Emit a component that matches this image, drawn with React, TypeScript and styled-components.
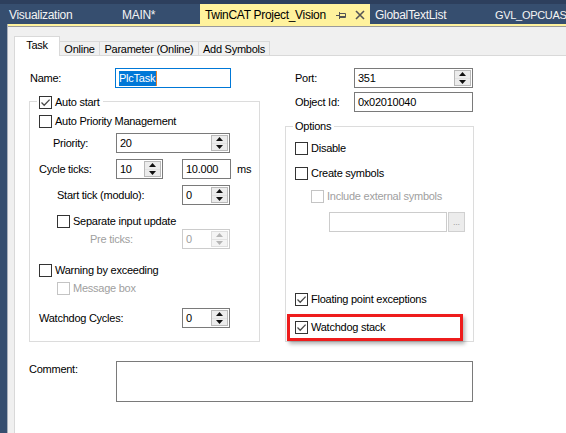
import React from 'react';
import styled, { createGlobalStyle } from 'styled-components';

const GlobalStyle = createGlobalStyle`
  html, body { margin: 0; padding: 0; }
  body {
    background: #f0f0f0;
    font-family: "Liberation Sans", Arial, sans-serif;
    font-size: 11px;
    letter-spacing: -0.25px;
    color: #000;
  }
  * { box-sizing: border-box; }
`;

const Frame = styled.div`
  width: 566px;
  height: 433px;
  overflow: hidden;
  display: flex;
  flex-direction: column;
`;

/* ---------- document tab bar ---------- */

const DocBar = styled.div`
  height: 24px;
  flex: none;
  display: flex;
  padding-left: 4px;
  background: #364e6f;
  border-top: 4px solid #2d3f5d;
  overflow: hidden;
`;

const DocTab = styled.div<{ $width: number; $active?: boolean; $size?: number }>`
  width: ${({ $width }) => $width}px;
  flex: none;
  height: 20px;
  display: flex;
  align-items: center;
  padding: 2px 5px 0 5px;
  font-size: ${({ $size }) => $size ?? 12}px;
  letter-spacing: -0.3px;
  white-space: nowrap;
  color: ${({ $active }) => ($active ? '#000' : '#f4f4f4')};
  background: ${({ $active }) => ($active ? '#fff29d' : 'transparent')};
`;

const DocTabTitle = styled.span`
  flex: 1;
`;

const DocTabIcons = styled.span`
  display: flex;
  align-items: center;
  gap: 9px;
`;

/* ---------- body ---------- */

const Body = styled.div`
  flex: 1;
  display: flex;
  min-height: 0;
`;

const SideStrip = styled.div`
  width: 8px;
  flex: none;
  background: #364e6f;
  border-right: 1px solid #a9b0bb;
`;

const Main = styled.div`
  flex: 1;
  display: flex;
  flex-direction: column;
  border-top: 2px solid #fff29d;
`;

const TabWell = styled.div`
  flex: 1;
  display: flex;
  flex-direction: column;
  padding-left: 6px;
  background: #f0f0f0;
  border-top: 1px solid #9a9a9a;
`;

const TabStrip = styled.div`
  height: 28px;
  flex: none;
  display: flex;
  align-items: flex-end;
`;

const PageTab = styled.div<{ $width: number; $active?: boolean }>`
  width: ${({ $width }) => $width}px;
  height: ${({ $active }) => ($active ? 20 : 14)}px;
  display: flex;
  align-items: center;
  justify-content: center;
  white-space: nowrap;
  border-top: 1px solid #d9d9d9;
  border-right: 1px solid #d9d9d9;
  border-left: ${({ $active }) => ($active ? '1px solid #d9d9d9' : 'none')};
  background: ${({ $active }) => ($active ? '#fff' : '#f0f0f0')};
  padding-bottom: ${({ $active }) => ($active ? 4 : 0)}px;
  margin-bottom: ${({ $active }) => ($active ? -1 : 0)}px;
  position: ${({ $active }) => ($active ? 'relative' : 'static')};
  z-index: ${({ $active }) => ($active ? 1 : 'auto')};
`;

const Pane = styled.div`
  flex: 1;
  background: #fff;
  border-top: 1px solid #d9d9d9;
  border-left: 1px solid #d9d9d9;
  padding: 12px 0 0 14px;
`;

const Columns = styled.div`
  display: flex;
  align-items: flex-start;
  gap: 25px;
`;

const Column = styled.div<{ $width: number }>`
  width: ${({ $width }) => $width}px;
  flex: none;
  display: flex;
  flex-direction: column;
`;

/* ---------- group boxes ---------- */

const GroupBox = styled.div<{ $top: number; $bottom: number }>`
  margin-top: ${({ $top }) => $top}px;
  padding-bottom: ${({ $bottom }) => $bottom}px;
  border: 1px solid #dcdcdc;
  display: flex;
  flex-direction: column;
`;

const Legend = styled.div<{ $lift: number }>`
  align-self: flex-start;
  display: flex;
  align-items: center;
  gap: 3px;
  height: 13px;
  line-height: 13px;
  margin: -${({ $lift }) => $lift}px 0 0 7px;
  padding: 0 3px 0 2px;
  background: #fff;
`;

/* ---------- rows ---------- */

const FieldRow = styled.div<{ $top?: number; $indent?: number }>`
  display: flex;
  align-items: center;
  height: 20px;
  margin-top: ${({ $top }) => $top ?? 0}px;
  padding-left: ${({ $indent }) => $indent ?? 0}px;
`;

const FieldLabel = styled.span<{ $width: number; $disabled?: boolean }>`
  width: ${({ $width }) => $width}px;
  flex: none;
  white-space: nowrap;
  color: ${({ $disabled }) => ($disabled ? '#a0a0a0' : '#000')};
`;

const Unit = styled.span`
  margin-left: 6px;
`;

const CheckRow = styled.div<{ $top?: number; $indent?: number; $disabled?: boolean }>`
  display: flex;
  align-items: center;
  gap: 3px;
  height: 13px;
  line-height: 13px;
  white-space: nowrap;
  margin-top: ${({ $top }) => $top ?? 0}px;
  padding-left: ${({ $indent }) => $indent ?? 0}px;
  color: ${({ $disabled }) => ($disabled ? '#a0a0a0' : '#000')};
`;

const Box = styled.span<{ $disabled?: boolean }>`
  width: 13px;
  height: 13px;
  flex: none;
  display: flex;
  align-items: center;
  justify-content: center;
  background: #fff;
  border: 1px solid ${({ $disabled }) => ($disabled ? '#c4c4c4' : '#333')};
`;

const Highlight = styled.div<{ $top: number }>`
  margin: ${({ $top }) => $top}px 0 0 1px;
  width: 176px;
  height: 27px;
  display: flex;
  align-items: center;
  padding: 0 0 1px 5px;
  border: 3px solid #ee1c1c;
  box-shadow: 2px 3px 4px rgba(0, 0, 0, 0.3);
  background: #fff;
  position: relative;
`;

/* ---------- inputs ---------- */

const TextBox = styled.div<{ $width: number; $focused?: boolean; $disabled?: boolean; $gap?: number }>`
  width: ${({ $width }) => $width}px;
  height: 20px;
  flex: none;
  display: flex;
  align-items: center;
  margin-left: ${({ $gap }) => $gap ?? 0}px;
  padding: 0 1px 0 3px;
  background: #fff;
  white-space: nowrap;
  color: ${({ $disabled }) => ($disabled ? '#a0a0a0' : '#000')};
  border: 1px solid
    ${({ $focused, $disabled }) => ($focused ? '#0078d7' : $disabled ? '#cccccc' : '#7a7a7a')};
`;

const Value = styled.span`
  flex: 1;
`;

const Selected = styled.span`
  background: #0078d7;
  color: #fff;
  line-height: 15px;
  padding-right: 1px;
  border-right: 1px solid #e8842c;
`;

const Spinner = styled.span<{ $disabled?: boolean }>`
  width: 17px;
  height: 16px;
  flex: none;
  display: flex;
  flex-direction: column;
  border: 1px solid ${({ $disabled }) => ($disabled ? '#dedede' : '#b9b9b9')};
  background: ${({ $disabled }) => ($disabled ? '#f4f4f4' : '#ececec')};
`;

const SpinHalf = styled.span<{ $disabled?: boolean }>`
  flex: 1;
  display: flex;
  align-items: center;
  justify-content: center;
  & + & {
    border-top: 1px solid ${({ $disabled }) => ($disabled ? '#e2e2e2' : '#c6c6c6')};
  }
  svg {
    fill: ${({ $disabled }) => ($disabled ? '#b5b5b5' : '#111')};
  }
`;

const BrowseButton = styled.span`
  width: 17px;
  height: 20px;
  flex: none;
  display: flex;
  align-items: flex-end;
  justify-content: center;
  padding-bottom: 4px;
  margin-left: 1px;
  font-size: 9px;
  line-height: 9px;
  color: #a0a0a0;
  background: #ececec;
  border: 1px solid #d0d0d0;
`;

const CommentRow = styled.div`
  display: flex;
  align-items: flex-start;
  margin-top: 19px;
`;

const CommentLabel = styled.span`
  width: 87px;
  flex: none;
  margin-top: 2px;
`;

const CommentBox = styled.div`
  width: 357px;
  height: 41px;
  background: #fff;
  border: 1px solid #7a7a7a;
`;

/* ---------- small parts ---------- */

const Check = ({ checked, disabled }: { checked?: boolean; disabled?: boolean }) => (
  <Box $disabled={disabled}>
    {checked && (
      <svg width="11" height="11" viewBox="0 0 11 11">
        <path d="M1.5 5.5 L4.2 8.2 L9.6 2.6" fill="none" stroke="#4a4a4a" strokeWidth="1.3" />
      </svg>
    )}
  </Box>
);

const CheckItem = ({
  label, checked, disabled, top, indent,
}: { label: string; checked?: boolean; disabled?: boolean; top?: number; indent?: number }) => (
  <CheckRow $top={top} $indent={indent} $disabled={disabled}>
    <Check checked={checked} disabled={disabled} />
    {label}
  </CheckRow>
);

const SpinBox = ({ value, width, disabled }: { value: string; width: number; disabled?: boolean }) => (
  <TextBox $width={width} $disabled={disabled}>
    <Value>{value}</Value>
    <Spinner $disabled={disabled}>
      <SpinHalf $disabled={disabled}>
        <svg width="7" height="4" viewBox="0 0 7 4"><polygon points="0,4 3.5,0 7,4" /></svg>
      </SpinHalf>
      <SpinHalf $disabled={disabled}>
        <svg width="7" height="4" viewBox="0 0 7 4"><polygon points="0,0 7,0 3.5,4" /></svg>
      </SpinHalf>
    </Spinner>
  </TextBox>
);

const PinIcon = () => (
  <svg width="10" height="9" viewBox="0 0 10 9">
    <path d="M0 4.5 H3.5 M3.5 1 V8" stroke="#555" strokeWidth="1" fill="none" />
    <path d="M3.5 2.5 H9.5 V6.5 H3.5" stroke="#555" strokeWidth="1" fill="none" />
    <path d="M3.5 5.5 H9.5" stroke="#555" strokeWidth="1" />
  </svg>
);

const CloseIcon = () => (
  <svg width="10" height="10" viewBox="0 0 10 10">
    <path d="M1 1 L9 9 M9 1 L1 9" stroke="#555" strokeWidth="1.6" />
  </svg>
);

const App = () => (
  <>
    <GlobalStyle />
    <Frame>
      <DocBar>
        <DocTab $width={113}>Visualization</DocTab>
        <DocTab $width={83}>MAIN*</DocTab>
        <DocTab $width={170} $active>
          <DocTabTitle>TwinCAT Project_Vision</DocTabTitle>
          <DocTabIcons>
            <PinIcon />
            <CloseIcon />
          </DocTabIcons>
        </DocTab>
        <DocTab $width={120}>GlobalTextList</DocTab>
        <DocTab $width={76} $size={11}>GVL_OPCUAS</DocTab>
      </DocBar>

      <Body>
        <SideStrip />
        <Main>
          <TabWell>
            <TabStrip>
              <PageTab $width={46} $active>Task</PageTab>
              <PageTab $width={40}>Online</PageTab>
              <PageTab $width={99}>Parameter (Online)</PageTab>
              <PageTab $width={71}>Add Symbols</PageTab>
            </TabStrip>

            <Pane>
              <Columns>
                <Column $width={231}>
                  <FieldRow $indent={1}>
                    <FieldLabel $width={85}>Name:</FieldLabel>
                    <TextBox $width={116} $focused>
                      <Selected>PlcTask</Selected>
                    </TextBox>
                  </FieldRow>

                  <GroupBox $top={13} $bottom={13}>
                    <Legend $lift={6}>
                      <Check checked />
                      Auto start
                    </Legend>
                    <CheckItem label="Auto Priority Management" top={6} indent={9} />
                    <FieldRow $top={5} $indent={23}>
                      <FieldLabel $width={63}>Priority:</FieldLabel>
                      <SpinBox value="20" width={114} />
                    </FieldRow>
                    <FieldRow $top={6} $indent={9}>
                      <FieldLabel $width={77}>Cycle ticks:</FieldLabel>
                      <SpinBox value="10" width={47} />
                      <TextBox $width={49} $gap={19}>10.000</TextBox>
                      <Unit>ms</Unit>
                    </FieldRow>
                    <FieldRow $top={6} $indent={27}>
                      <FieldLabel $width={125}>Start tick (modulo):</FieldLabel>
                      <SpinBox value="0" width={48} />
                    </FieldRow>
                    <CheckItem label="Separate input update" top={10} indent={27} />
                    <FieldRow $top={1} $indent={60}>
                      <FieldLabel $width={92} $disabled>Pre ticks:</FieldLabel>
                      <SpinBox value="0" width={48} disabled />
                    </FieldRow>
                    <CheckItem label="Warning by exceeding" top={15} indent={9} />
                    <CheckItem label="Message box" top={5} indent={27} disabled />
                    <FieldRow $top={13} $indent={9}>
                      <FieldLabel $width={143}>Watchdog Cycles:</FieldLabel>
                      <SpinBox value="0" width={48} />
                    </FieldRow>
                  </GroupBox>
                </Column>

                <Column $width={189}>
                  <FieldRow $indent={10}>
                    <FieldLabel $width={59}>Port:</FieldLabel>
                    <SpinBox value="351" width={119} />
                  </FieldRow>
                  <FieldRow $top={4} $indent={10}>
                    <FieldLabel $width={59}>Object Id:</FieldLabel>
                    <TextBox $width={119}>0x02010040</TextBox>
                  </FieldRow>

                  <GroupBox $top={14} $bottom={0}>
                    <Legend $lift={7}>Options</Legend>
                    <CheckItem label="Disable" top={9} indent={9} />
                    <CheckItem label="Create symbols" top={12} indent={9} />
                    <CheckItem label="Include external symbols" top={10} indent={25} disabled />
                    <FieldRow $top={9} $indent={43}>
                      <TextBox $width={118} $disabled />
                      <BrowseButton>...</BrowseButton>
                    </FieldRow>
                    <CheckItem label="Floating point exceptions" checked top={61} indent={9} />
                    <Highlight $top={8}>
                      <CheckItem label="Watchdog stack" checked />
                    </Highlight>
                  </GroupBox>
                </Column>
              </Columns>

              <CommentRow>
                <CommentLabel>Comment:</CommentLabel>
                <CommentBox />
              </CommentRow>
            </Pane>
          </TabWell>
        </Main>
      </Body>
    </Frame>
  </>
);

export default App;
